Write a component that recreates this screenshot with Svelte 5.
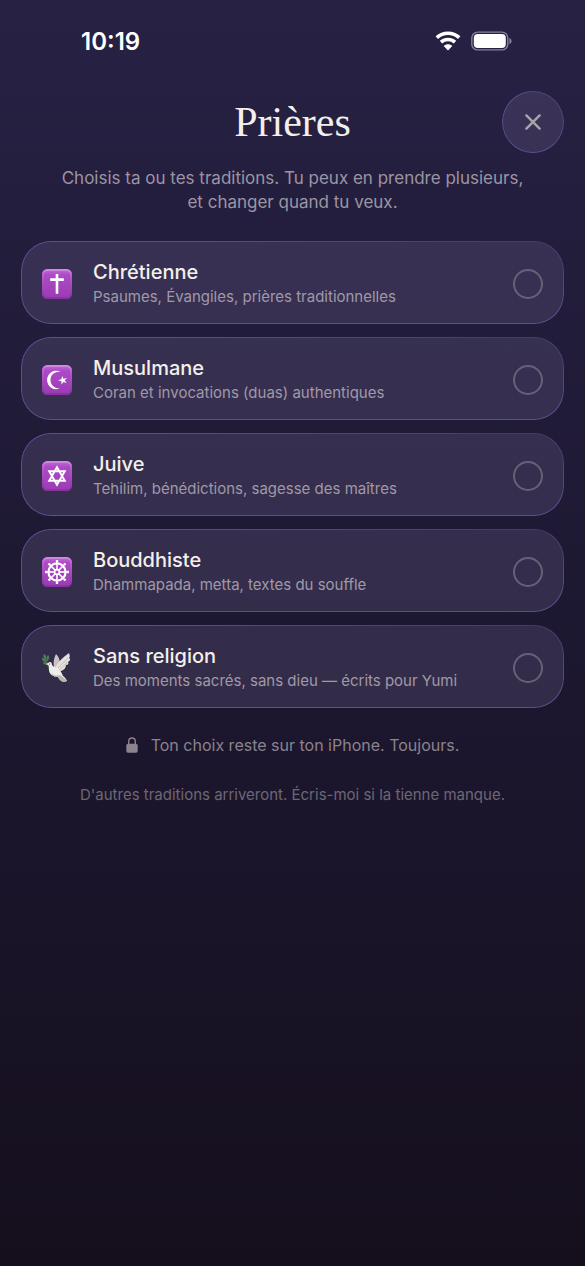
<script lang="ts">
  type Tradition = {
    id: 'cross' | 'crescent' | 'star' | 'wheel' | 'dove';
    name: string;
    detail: string;
  };

  const traditions: Tradition[] = [
    { id: 'cross', name: 'Chrétienne', detail: 'Psaumes, Évangiles, prières traditionnelles' },
    { id: 'crescent', name: 'Musulmane', detail: 'Coran et invocations (duas) authentiques' },
    { id: 'star', name: 'Juive', detail: 'Tehilim, bénédictions, sagesse des maîtres' },
    { id: 'wheel', name: 'Bouddhiste', detail: 'Dhammapada, metta, textes du souffle' },
    { id: 'dove', name: 'Sans religion', detail: 'Des moments sacrés, sans dieu — écrits pour Yumi' }
  ];

  const spokes = [0, 45, 90, 135, 180, 225, 270, 315];

  let selected = $state<string[]>([]);
  let open = $state(true);
</script>

{#snippet icon(id: Tradition['id'])}
  <svg class="icon" viewBox="0 0 30 30" aria-hidden="true">
    {#if id === 'dove'}
      <path d="M7 17 C6 12 5 8 3 4" fill="none" stroke="#3f6b45" stroke-width="1" />
      <path
        d="M4 6 C1 5 1 3 2 1 C4 2 5 4 4 6Z M5 9 C2 9 0 8 0 5 C3 5 5 7 5 9Z M5 8 C4 5 5 3 6 2 C8 4 7 7 5 8Z M6 12 C3 12 1 11 1 9 C4 9 6 10 6 12Z"
        fill="#4c8050"
      />
      <path d="M12 14 C11 9 12 5 14 1 C17 4 18 7 18 11 L15 17Z" fill="#c9c4c2" />
      <path
        d="M13 15 C16 9 21 4 27 0 C28 3 28 4 27 5 C29 6 28 8 26 9 C27 11 26 12 24 12 C24 15 22 17 19 18 L14 19Z"
        fill="#e4e0dd"
      />
      <path
        d="M6 10 C8 8 10 9 10 12 C11 14 14 14 17 16 C19 18 20 21 21 23 C23 24 24 26 25 28 C21 30 18 28 16 24 C11 24 7 21 7 17 C7 14 7 13 6 12 L4 11Z"
        fill="#efebe8"
      />
      <path d="M9 20 C12 23 15 23 18 22 C21 24 23 26 25 28 C21 30 18 28 16 24 C12 24 10 22 9 20Z" fill="#bcb4b2" />
      <path d="M16 15 C19 12 22 9 26 5 M17 17 C20 15 23 12 25 9" fill="none" stroke="#b5adab" stroke-width="0.7" />
      <circle cx="7.5" cy="11" r="0.5" fill="#2b2530" />
    {:else}
      <rect width="30" height="30" rx="5.5" fill="url(#tile)" />
      <rect x="1" y="1" width="28" height="28" rx="4.5" fill="none" stroke="url(#shine)" stroke-width="1.8" />
      {#if id === 'cross'}
        <path d="M15 5V24.8 M8.2 10.6H21.8" fill="none" stroke="#fff" stroke-width="2.6" />
      {:else if id === 'crescent'}
        <path d="M18.6 6.9 A9.2 9.2 0 1 0 18.6 23.1 A8.3 8.3 0 1 1 18.6 6.9Z" fill="#fff" />
        <path
          d="M20.2 11 L21.4 13.7 L25 13 L22.7 15.3 L24.7 18.1 L21.4 17 L19.5 19.6 L19.4 16.3 L16 15.2 L19.4 14.2Z"
          fill="#fff"
        />
      {:else if id === 'star'}
        <path
          d="M15 6.2 L22.8 19.7 H7.2Z M15 23.8 L22.8 10.3 H7.2Z"
          fill="none"
          stroke="#fff"
          stroke-width="1.9"
        />
      {:else}
        <g fill="none" stroke="#fff">
          <circle cx="15" cy="15" r="8.6" stroke-width="2.2" />
          <circle cx="15" cy="15" r="2.4" stroke-width="1.7" />
          {#each spokes as angle}
            <path d="M15 12.5V3.2" stroke-width="1.6" transform="rotate({angle} 15 15)" />
            <path d="M13.8 3.9H16.2" stroke-width="1.6" transform="rotate({angle} 15 15)" />
          {/each}
        </g>
      {/if}
    {/if}
  </svg>
{/snippet}

<svelte:head>
  <title>Prières</title>
</svelte:head>

<!-- shared fills for the purple tiles -->
<svg class="defs" aria-hidden="true">
  <defs>
    <linearGradient id="tile" x1="0" y1="0" x2="0" y2="1">
      <stop offset="0" stop-color="#c46cd8" />
      <stop offset="0.2" stop-color="#ad4bc5" />
      <stop offset="1" stop-color="#9a3bb4" />
    </linearGradient>
    <linearGradient id="shine" x1="0" y1="0" x2="0" y2="1">
      <stop offset="0" stop-color="#d78fe6" stop-opacity="0.8" />
      <stop offset="0.3" stop-color="#bd6ad0" stop-opacity="0.4" />
      <stop offset="1" stop-color="#7d2b98" stop-opacity="0.6" />
    </linearGradient>
  </defs>
</svg>

<div class="status">
  <span class="time">10:19</span>
  <div class="indicators">
    <svg width="26" height="20" viewBox="0 0 26 20" aria-hidden="true">
      <path
        d="M1.8 6.6 C8 0.8 18 0.8 24.2 6.6 M6 11.2 C10 7.6 16 7.6 20 11.2"
        fill="none"
        stroke="#fff"
        stroke-width="3.6"
      />
      <path d="M8.7 15 C11.2 12.8 14.8 12.8 17.3 15 L13 19.4Z" fill="#fff" />
    </svg>
    <svg width="41" height="20" viewBox="0 0 41 20" aria-hidden="true">
      <rect x="0.8" y="1.1" width="36" height="17.8" rx="6" fill="none" stroke="#86819b" stroke-width="1.4" />
      <rect x="2.8" y="3.1" width="32" height="13.8" rx="4" fill="#fff" />
      <path d="M38.4 7 C41.3 8 41.3 12.2 38.4 13.2Z" fill="#86819b" />
    </svg>
  </div>
</div>

{#if open}
  <main>
    <header>
      <h1>Prières</h1>
      <button class="close" aria-label="Fermer" onclick={() => (open = false)}>
        <svg width="16" height="16" viewBox="0 0 16 16" aria-hidden="true">
          <path d="M1.4 1.4L14.6 14.6M14.6 1.4L1.4 14.6" stroke="#aaa4ac" stroke-width="2.4" stroke-linecap="round" />
        </svg>
      </button>
    </header>

    <p class="intro">Choisis ta ou tes traditions. Tu peux en prendre plusieurs, et changer quand tu veux.</p>

    <div class="list">
      {#each traditions as tradition (tradition.id)}
        <label class="card">
          {@render icon(tradition.id)}
          <span class="text">
            <span class="name">{tradition.name}</span>
            <span class="detail">{tradition.detail}</span>
          </span>
          <input type="checkbox" value={tradition.id} bind:group={selected} />
        </label>
      {/each}
    </div>

    <p class="privacy">
      <svg width="12" height="16" viewBox="0 0 12 16" aria-hidden="true">
        <path d="M2.7 8V4.6C2.7 -0.2 9.3 -0.2 9.3 4.6V8" fill="none" stroke="#8b838e" stroke-width="1.4" />
        <rect x="0.3" y="6.8" width="11.4" height="9" rx="1.7" fill="#8b838e" />
      </svg>
      Ton choix reste sur ton iPhone. Toujours.
    </p>
    <p class="more">D'autres traditions arriveront. Écris-moi si la tienne manque.</p>
  </main>
{/if}

<style>
  :global(body) {
    min-height: 100vh;
    background: linear-gradient(#272144 0%, #1c172f 55%, #150f1d 100%);
    color: #f4efea;
    font-family: Inter, 'Liberation Sans', sans-serif;
  }

  .defs {
    position: absolute;
    width: 0;
    height: 0;
  }

  .status {
    display: flex;
    align-items: center;
    justify-content: space-between;
    height: 82px;
    padding: 0 73px 0 81px;
    color: #fff;
  }

  .time {
    font-size: 24px;
    font-weight: 600;
  }

  .indicators {
    display: flex;
    align-items: center;
    gap: 10px;
  }

  main {
    padding: 9px 21px 0;
  }

  header {
    display: grid;
    grid-template-columns: 62px 1fr 62px;
    align-items: center;
  }

  h1 {
    grid-column: 2;
    margin: 0;
    font-family: 'Liberation Serif', serif;
    font-size: 42px;
    font-weight: 400;
    text-align: center;
  }

  .close,
  .card {
    position: relative;
    background: rgba(120, 108, 150, 0.25);
  }

  .close {
    display: flex;
    align-items: center;
    justify-content: center;
    width: 62px;
    height: 62px;
    padding: 0;
    border: none;
    border-radius: 50%;
    cursor: pointer;
  }

  /* Thin edge that fades towards the top right corner */
  .close::before,
  .card::before {
    content: '';
    position: absolute;
    inset: 0;
    padding: 1px;
    border-radius: inherit;
    background: linear-gradient(to bottom left, #443a62, #5d4f8e 40%, #5d4f8e);
    mask: linear-gradient(#000 0 0) content-box exclude, linear-gradient(#000 0 0);
    pointer-events: none;
  }

  .intro {
    max-width: 480px;
    margin: 13px auto 0;
    color: #9c95a3;
    font-size: 17px;
    line-height: 24px;
    text-align: center;
  }

  .list {
    display: flex;
    flex-direction: column;
    gap: 13px;
    margin-top: 27px;
  }

  .card {
    display: flex;
    align-items: center;
    gap: 21px;
    min-height: 83px;
    box-sizing: border-box;
    padding: 16px 21px 14px;
    border-radius: 30px;
    cursor: pointer;
  }

  .icon {
    flex-shrink: 0;
    width: 30px;
    height: 30px;
  }

  .text {
    display: flex;
    flex: 1;
    flex-direction: column;
    min-width: 0;
  }

  .name {
    font-size: 20px;
    font-weight: 500;
    line-height: 26px;
  }

  .detail {
    color: #a099a8;
    font-size: 15px;
    line-height: 24px;
  }

  input {
    appearance: none;
    flex-shrink: 0;
    box-sizing: border-box;
    width: 30px;
    height: 30px;
    margin: 0;
    border: 2px solid #686176;
    border-radius: 50%;
    cursor: pointer;
  }

  input:checked {
    border-color: #b79cf0;
    background: #8a6fd0;
  }

  .privacy {
    display: flex;
    align-items: center;
    justify-content: center;
    gap: 13px;
    margin: 25px 0 0;
    color: #8b838e;
    font-size: 16px;
    line-height: 24px;
  }

  .more {
    margin: 26px 0 0;
    color: #6e6775;
    font-size: 15px;
    line-height: 24px;
    text-align: center;
  }
</style>
